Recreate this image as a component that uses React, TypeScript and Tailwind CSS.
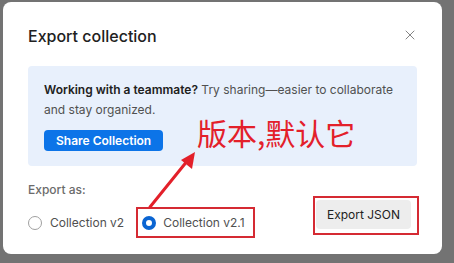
import { X } from "lucide-react";

export default function App() {
  return (
    <div className="relative h-[263px] w-[454px] overflow-hidden bg-[#737373] pl-[3px] pt-[2px] font-['Inter',sans-serif]">
      <div className="h-[252px] w-[439px] rounded-[8px] bg-white px-[25px] pt-[22px]">
        <div className="flex h-[24px] items-center justify-between">
          <h2 className="text-[16px] font-medium text-[#212121]">Export collection</h2>
          <X className="-mr-[1px] -mt-[3px] h-[16px] w-[16px] text-[#6b6b6b]" strokeWidth={1.25} />
        </div>

        <div className="mt-[18px] h-[100px] rounded-[4px] bg-[#e8f0fc] px-[16px] pt-[14px]">
          <p className="text-[12px] leading-[20px] text-[#505050]">
            <span className="font-semibold text-[#212121]">Working with a teammate?</span> Try
            sharing—easier to collaborate and stay organized.
          </p>
          <button className="mt-[10px] h-[21px] rounded-[4px] bg-[#0c74e8] px-[12px] text-[12px] font-semibold text-white">
            Share Collection
          </button>
        </div>

        <div className="mt-[14px] flex items-end justify-between">
          <div>
            <div className="text-[12px] font-medium leading-[20px] text-[#6b6b6b]">Export as:</div>
            <div className="mt-[7px] flex items-center">
              <label className="flex items-center gap-[8px]">
                <span className="h-[14px] w-[14px] rounded-full border border-[#a0a0a0]" />
                <span className="text-[12px] text-[#505050]">Collection v2</span>
              </label>
              <label className="ml-[12px] flex h-[31px] items-center gap-[7px] border-2 border-[#d52a33] pl-[4px] pr-[8px]">
                <span className="h-[14px] w-[14px] rounded-full border-[4px] border-[#0b65d2] bg-white" />
                <span className="text-[12px] text-[#505050]">Collection v2.1</span>
              </label>
            </div>
          </div>
          <div className="-mr-[2px] mb-[3px] border-2 border-[#d52a33] pb-[4px] pl-[1px] pr-[6px] pt-[2px]">
            <button className="h-[29px] rounded-[4px] bg-[#ededed] px-[11px] text-[12px] text-[#212121]">
              Export JSON
            </button>
          </div>
        </div>
      </div>

      <div className="absolute left-[197px] top-[112px] text-[30px] leading-[40px] text-[#e3202a] font-['Noto_Sans_CJK_SC',sans-serif]">
        版本,默认它
      </div>
      <svg className="absolute left-0 top-0" width="454" height="263" viewBox="0 0 454 263">
        <line x1="150" y1="207" x2="188" y2="160" stroke="#e3202a" strokeWidth="3" strokeLinecap="round" />
        <polygon points="195,152 181,160 192,169" fill="#e3202a" />
      </svg>
    </div>
  );
}
